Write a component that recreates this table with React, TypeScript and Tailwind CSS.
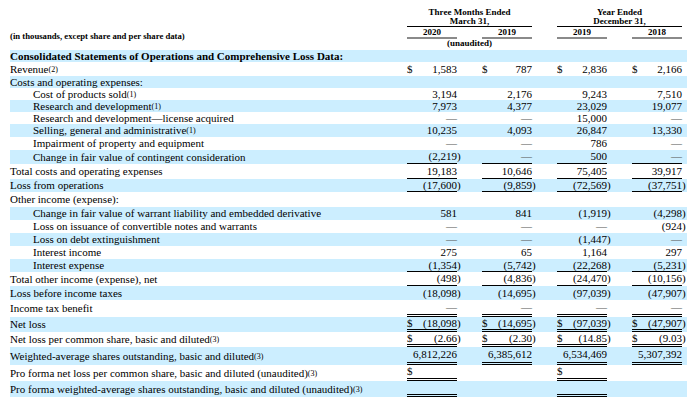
import React from "react";
import clsx from "clsx";

// one data cell: optional $ on the left, value right aligned, optional rule below
type Cell = { d?: boolean; v?: string; b?: 0 | 1 | 2 };
type Row = {
  h: string;
  label: string;
  fn?: string;
  indent?: boolean;
  bold?: boolean;
  cells?: (Cell | null)[];
};

const dash: Cell = { v: "—" };

const rows: Row[] = [
  { h: "h-[12px]", label: "Consolidated Statements of Operations and Comprehensive Loss Data:", bold: true },
  { h: "h-[14px]", label: "Revenue", fn: "(2)", cells: [{ d: true, v: "1,583" }, { d: true, v: "787" }, { d: true, v: "2,836" }, { d: true, v: "2,166" }] },
  { h: "h-[12px]", label: "Costs and operating expenses:" },
  { h: "h-[12px]", label: "Cost of products sold", fn: "(1)", indent: true, cells: [{ v: "3,194" }, { v: "2,176" }, { v: "9,243" }, { v: "7,510" }] },
  { h: "h-[12px]", label: "Research and development", fn: "(1)", indent: true, cells: [{ v: "7,973" }, { v: "4,377" }, { v: "23,029" }, { v: "19,077" }] },
  { h: "h-[12px]", label: "Research and development—license acquired", indent: true, cells: [dash, dash, { v: "15,000" }, dash] },
  { h: "h-[13px]", label: "Selling, general and administrative", fn: "(1)", indent: true, cells: [{ v: "10,235" }, { v: "4,093" }, { v: "26,847" }, { v: "13,330" }] },
  { h: "h-[13px]", label: "Impairment of property and equipment", indent: true, cells: [dash, dash, { v: "786" }, dash] },
  { h: "h-[14px]", label: "Change in fair value of contingent consideration", indent: true, cells: [{ v: "(2,219)", b: 1 }, { v: "—", b: 1 }, { v: "500", b: 1 }, { v: "—", b: 1 }] },
  { h: "h-[15px]", label: "Total costs and operating expenses", cells: [{ v: "19,183", b: 1 }, { v: "10,646", b: 1 }, { v: "75,405", b: 1 }, { v: "39,917", b: 1 }] },
  { h: "h-[13px]", label: "Loss from operations", cells: [{ v: "(17,600)", b: 1 }, { v: "(9,859)", b: 1 }, { v: "(72,569)", b: 1 }, { v: "(37,751)", b: 1 }] },
  { h: "h-[15px]", label: "Other income (expense):" },
  { h: "h-[13px]", label: "Change in fair value of warrant liability and embedded derivative", indent: true, cells: [{ v: "581" }, { v: "841" }, { v: "(1,919)" }, { v: "(4,298)" }] },
  { h: "h-[13px]", label: "Loss on issuance of convertible notes and warrants", indent: true, cells: [dash, dash, dash, { v: "(924)" }] },
  { h: "h-[13px]", label: "Loss on debt extinguishment", indent: true, cells: [dash, dash, { v: "(1,447)" }, dash] },
  { h: "h-[13px]", label: "Interest income", indent: true, cells: [{ v: "275" }, { v: "65" }, { v: "1,164" }, { v: "297" }] },
  { h: "h-[13px]", label: "Interest expense", indent: true, cells: [{ v: "(1,354)", b: 1 }, { v: "(5,742)", b: 1 }, { v: "(22,268)", b: 1 }, { v: "(5,231)", b: 1 }] },
  { h: "h-[14px]", label: "Total other income (expense), net", cells: [{ v: "(498)", b: 1 }, { v: "(4,836)", b: 1 }, { v: "(24,470)", b: 1 }, { v: "(10,156)", b: 1 }] },
  { h: "h-[14px]", label: "Loss before income taxes", cells: [{ v: "(18,098)" }, { v: "(14,695)" }, { v: "(97,039)" }, { v: "(47,907)" }] },
  { h: "h-[17px]", label: "Income tax benefit", cells: [{ v: "—", b: 2 }, { v: "—", b: 2 }, { v: "—", b: 2 }, { v: "—", b: 2 }] },
  { h: "h-[15px]", label: "Net loss", cells: [{ d: true, v: "(18,098)", b: 2 }, { d: true, v: "(14,695)", b: 2 }, { d: true, v: "(97,039)", b: 2 }, { d: true, v: "(47,907)", b: 2 }] },
  { h: "h-[15px]", label: "Net loss per common share, basic and diluted", fn: "(3)", cells: [{ d: true, v: "(2.66)", b: 2 }, { d: true, v: "(2.30)", b: 2 }, { d: true, v: "(14.85)", b: 2 }, { d: true, v: "(9.03)", b: 2 }] },
  { h: "h-[18px]", label: "Weighted-average shares outstanding, basic and diluted", fn: "(3)", cells: [{ v: "6,812,226", b: 2 }, { v: "6,385,612", b: 2 }, { v: "6,534,469", b: 2 }, { v: "5,307,392", b: 2 }] },
  { h: "h-[16px]", label: "Pro forma net loss per common share, basic and diluted (unaudited)", fn: "(3)", cells: [{ d: true, b: 2 }, null, { d: true, b: 2 }, null] },
  { h: "h-[16px]", label: "Pro forma weighted-average shares outstanding, basic and diluted (unaudited)", fn: "(3)", cells: [{ b: 2 }, null, { b: 2 }, null] },
];

function Value({ cell }: { cell: Cell | null }) {
  if (!cell) return <div className="w-[50px]" />;
  const neg = cell.v?.endsWith(")");
  return (
    <div
      className={clsx(
        "w-[50px] flex items-center justify-between",
        cell.b === 1 && "border-b border-black",
        cell.b === 2 && "border-b-[3px] border-double border-black"
      )}
    >
      <span>{cell.d ? "$" : ""}</span>
      <span className={clsx("whitespace-nowrap", cell.v === "—" && "text-[#555]")}>
        {neg ? cell.v!.slice(0, -1) : cell.v}
        {neg && <span className="inline-block w-0">)</span>}
      </span>
    </div>
  );
}

function HeaderGroup({ title, sub, years, note }: { title: string; sub: string; years: string[]; note?: string }) {
  return (
    <div className="w-[125px] flex flex-col pt-[7px] font-bold text-[9px]">
      <div className="text-center leading-[10px]">{title}</div>
      <div className="text-center leading-[9px] border-b border-black">{sub}</div>
      <div className="flex justify-between">
        {years.map((y, i) => (
          <div key={i} className="w-[50px] text-center leading-[10px] border-b-2 border-[#8a8a8a]">
            {y}
          </div>
        ))}
      </div>
      {note && <div className="text-center leading-[9px]">{note}</div>}
    </div>
  );
}

export default function App() {
  return (
    <div className="w-[700px] h-[405px] bg-white text-black pl-[10px] pr-[13px] font-['Liberation_Serif','Times_New_Roman',serif] overflow-hidden">
      <div className="h-[50px] flex">
        <div className="w-[397px] flex flex-col justify-end pb-[9px] text-[8.7px] font-bold leading-[9px]">
          (in thousands, except share and per share data)
        </div>
        <div className="flex gap-[25px] pr-[5px]">
          <HeaderGroup title="Three Months Ended" sub="March 31," years={["2020", "2019"]} note="(unaudited)" />
          <HeaderGroup title="Year Ended" sub="December 31," years={["2019", "2018"]} />
        </div>
      </div>

      {rows.map((r, i) => (
        <div
          key={i}
          className={clsx("flex text-[11px] leading-none", r.h, i % 2 === 0 && "bg-[#cceeff]")}
        >
          <div
            className={clsx(
              "w-[397px] flex items-center whitespace-nowrap",
              r.indent && "pl-[23px]",
              r.bold && "font-bold"
            )}
          >
            <span>
              {r.label}
              {r.fn && <span className="text-[8px] align-[1px]">{r.fn}</span>}
            </span>
          </div>
          {r.cells && (
            <div className="flex gap-[25px] pr-[5px]">
              {r.cells.map((c, j) => (
                <Value key={j} cell={c} />
              ))}
            </div>
          )}
        </div>
      ))}
    </div>
  );
}
